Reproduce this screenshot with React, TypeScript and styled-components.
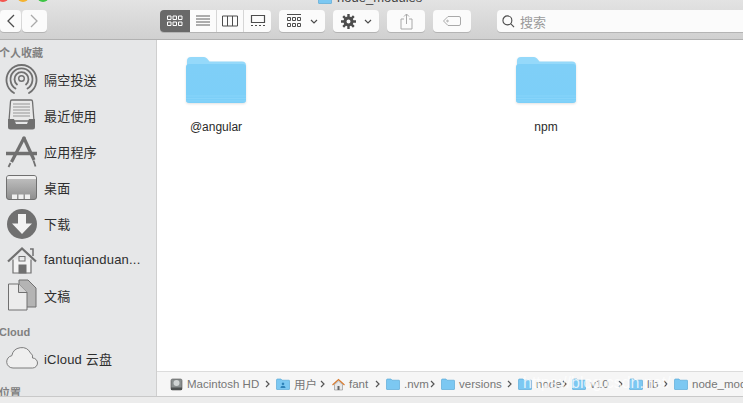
import React from 'react'
import styled, { createGlobalStyle } from 'styled-components'

const GlobalStyle = createGlobalStyle`
  html, body {
    margin: 0;
    padding: 0;
    background: #fff;
    overflow: hidden;
  }
  body {
    font-family: "Liberation Sans", "Noto Sans CJK SC", sans-serif;
    -webkit-font-smoothing: antialiased;
  }
`

const Window = styled.div`
  width: 743px;
  height: 403px;
  display: flex;
  flex-direction: column;
  overflow: hidden;
`

const Chrome = styled.div`
  height: 39px;
  flex: none;
  background: linear-gradient(#e3e3e3, #d0d0d0);
  border-bottom: 1px solid #b1b1b1;
  position: relative;
`

const Lights = styled.div`
  position: absolute;
  top: -10px;
  left: -3px;
  display: flex;
  gap: 8px;
`

const Light = styled.span<{ $color: string }>`
  width: 12px;
  height: 12px;
  border-radius: 50%;
  background: ${p => p.$color};
`

const Title = styled.div`
  position: absolute;
  top: -9px;
  left: 318px;
  display: flex;
  align-items: center;
  gap: 5px;
  font-size: 13px;
  color: #444;
  line-height: 13px;
`

const Tools = styled.div`
  display: flex;
  align-items: stretch;
  height: 22px;
  padding-top: 10px;
`

const Btn = styled.div<{ $w: number; $ml?: number; $dim?: boolean }>`
  width: ${p => p.$w}px;
  margin-left: ${p => p.$ml ?? 0}px;
  flex: none;
  box-sizing: border-box;
  background: #fbfbfb;
  border-radius: 4px;
  box-shadow: 0 1px 0 #b4b4b4;
  display: flex;
  align-items: center;
  justify-content: center;
  gap: 8px;
  color: ${p => (p.$dim ? '#a9a9a9' : '#4c4c4c')};
`

const Segs = styled.div`
  display: flex;
  margin-left: 113px;
  width: 111px;
  border-radius: 4px;
  overflow: hidden;
  box-shadow: 0 1px 0 #b4b4b4;
`

const Seg = styled.div<{ $w: number; $on?: boolean }>`
  width: ${p => p.$w}px;
  flex: none;
  box-sizing: border-box;
  display: flex;
  align-items: center;
  justify-content: center;
  background: ${p => (p.$on ? '#696969' : '#fbfbfb')};
  color: ${p => (p.$on ? '#fff' : '#4c4c4c')};
  border-right: ${p => (p.$on ? 'none' : '1px solid #d6d6d6')};
  &:last-child { border-right: none; }
`

const Search = styled.div`
  flex: 1;
  margin-left: 26px;
  background: #fbfbfb;
  border-radius: 4px 0 0 4px;
  box-shadow: 0 1px 0 #b4b4b4;
  display: flex;
  align-items: center;
  gap: 5px;
  padding-left: 5px;
  font-size: 13px;
  color: #9a9a9a;
`

const Body = styled.div`
  flex: 1;
  display: flex;
  min-height: 0;
`

const Sidebar = styled.div`
  width: 156px;
  flex: none;
  background: #e6e7e8;
  border-right: 1px solid #cfcfcf;
  overflow: hidden;
  padding-top: 5px;
`

const Heading = styled.div<{ $mt?: number }>`
  font-size: 11px;
  line-height: 16px;
  font-weight: 700;
  color: #808080;
  margin-left: -1px;
  margin-top: ${p => p.$mt ?? 0}px;
  white-space: nowrap;
`

const Item = styled.div`
  height: 36px;
  display: flex;
  align-items: center;
  gap: 6px;
  padding-left: 5px;
  font-size: 13px;
  letter-spacing: 0.2px;
  color: #2e2e2e;
  white-space: nowrap;
`

const Main = styled.div`
  flex: 1;
  display: flex;
  flex-direction: column;
  min-width: 0;
  position: relative;
`

const Grid = styled.div`
  flex: 1;
  display: flex;
  align-items: flex-start;
  gap: 270px;
  padding: 16px 0 0 29px;
`

const Cell = styled.div`
  width: 60px;
  display: flex;
  flex-direction: column;
  align-items: center;
  font-size: 12px;
  color: #2a2a2a;
`

const FolderArt = styled.svg`
  display: block;
  filter: drop-shadow(0 1px 1px rgba(0, 0, 0, 0.12));
`

const Label = styled.div`
  margin-top: 16px;
  line-height: 16px;
  white-space: nowrap;
`

const PathBar = styled.div`
  height: 25px;
  flex: none;
  box-sizing: border-box;
  border-top: 1px solid #dcdcdc;
  background: #f6f6f6;
  display: flex;
  align-items: center;
  padding-left: 13px;
  font-size: 11.5px;
  color: #777;
  white-space: nowrap;
  overflow: hidden;
  svg { flex: none; }
`

const DiskIcon = styled.svg`
  margin-right: 4px;
`

const Crumb = styled.span<{ $w: number }>`
  display: flex;
  align-items: center;
  gap: 4px;
  flex: none;
  width: ${p => p.$w}px;
  overflow: hidden;
`

const Sep = styled.span<{ $w: number; $pad: number }>`
  flex: none;
  box-sizing: border-box;
  width: ${p => p.$w}px;
  padding-left: ${p => p.$pad}px;
  display: flex;
  color: #555;
`

const Footer = styled.div`
  height: 6px;
  flex: none;
  background: #ececec;
  border-top: 1px solid #c9c9c9;
`

const Watermark = styled.div`
  position: absolute;
  left: 366px;
  bottom: 3px;
  line-height: 20px;
  font-size: 16px;
  color: rgba(255, 255, 255, 0.78);
  white-space: nowrap;
`

const Folder = () => (
  <FolderArt width="60" height="47" viewBox="0 0 60 47">
    <defs>
      <linearGradient id="folderBody" x1="0" y1="0" x2="0" y2="1">
        <stop offset="0" stopColor="#7fcff7" />
        <stop offset="1" stopColor="#7ccff8" />
      </linearGradient>
    </defs>
    <path d="M1 5a4 4 0 0 1 4-4h13a4 4 0 0 1 3 1.500l2.500 3h32.500a4 4 0 0 1 4 4v10H1z" fill="#95d9fa" />
    <path d="M0 11a3 3 0 0 1 3-3h54a3 3 0 0 1 3 3v33a3 3 0 0 1-3 3H3a3 3 0 0 1-3-3z" fill="url(#folderBody)" />
    <path d="M0 40h60M0 42.500h60M0 45h60" stroke="#8ad6fa" strokeWidth="0.8" />
  </FolderArt>
)

const MiniFolder = ({ mark }: { mark?: boolean }) => (
  <svg width="14" height="12" viewBox="0 0 14 12">
    <path d="M0.500 2a1 1 0 0 1 1-1h3.500l1 1.200h7a.5.5 0 0 1 .5.5V11a.5.5 0 0 1-.5.500H1a.5.5 0 0 1-.5-.5z" fill="#7cc8f2" stroke="#4ea3d4" strokeWidth="0.6" />
    {mark && <path d="M7 4.500a1.300 1.300 0 1 1-.01 0zM4.500 10c0-1.500 1-2.300 2.500-2.300s2.500.8 2.500 2.300z" fill="#2f82b8" />}
  </svg>
)

const Chevron = () => (
  <svg width="5" height="8" viewBox="0 0 5 8"><path d="M1 1l3 3-3 3" fill="none" stroke="currentColor" strokeWidth="1.200" /></svg>
)

const grey = '#707070'

const AirDropIcon = () => (
  <svg width="33" height="33" viewBox="0 0 33 33" fill="none" stroke={grey} strokeLinecap="round">
    <path d="M9 30A15 15 0 1 1 24 30" strokeWidth="1.800" />
    <path d="M10.500 25.500A11 11 0 1 1 22.500 25.500" strokeWidth="1.800" />
    <path d="M12 21.500A7 7 0 1 1 21 21.500" strokeWidth="1.800" />
    <circle cx="16.500" cy="15.500" r="2.800" strokeWidth="1.400" />
  </svg>
)

const TrayIcon = () => (
  <svg width="33" height="33" viewBox="0 0 33 33">
    <path d="M7 1h19a1.500 1.500 0 0 1 1.500 1.500L29 22H4L5.500 2.500A1.500 1.500 0 0 1 7 1z" fill="#e9e9e9" stroke={grey} strokeWidth="1.300" />
    <path d="M8 5h17M8 8h17M8 11h17M8 14h17M8 17h17" stroke="#959595" />
    <path d="M3 20h6l2 5h11l2-5h6v8a2.500 2.500 0 0 1-2.500 2.500h-22A2.500 2.500 0 0 1 3 28z" fill={grey} />
  </svg>
)

const AppsIcon = () => (
  <svg width="33" height="33" viewBox="0 0 33 33" fill="none" stroke={grey}>
    <path d="M1 18.500h31" strokeWidth="3.500" />
    <path d="M18.500 2l10.500 23" strokeWidth="3.200" />
    <path d="M19.500 2L6.500 27" strokeWidth="3.200" />
    <path d="M5.500 28l-2 4M28.500 25.500l2 6" strokeWidth="1.800" />
  </svg>
)

const DesktopIcon = () => (
  <svg width="33" height="33" viewBox="0 0 33 33">
    <defs>
      <linearGradient id="desk" x1="0" y1="0" x2="0" y2="1">
        <stop offset="0" stopColor="#c4c4c4" />
        <stop offset="1" stopColor="#8e8e8e" />
      </linearGradient>
    </defs>
    <rect x="1.500" y="4.500" width="30" height="24" rx="2.500" fill="url(#desk)" stroke={grey} />
    <path d="M2 7a2 2 0 0 1 2-2h25a2 2 0 0 1 2 2v1H2z" fill="#f0f0f0" />
    <path d="M7 23.500h5v4.500H7zM13.500 23.500h5v4.500h-5zM20 23.500h5v4.500h-5z" fill="#efefef" />
  </svg>
)

const DownloadIcon = () => (
  <svg width="33" height="33" viewBox="0 0 33 33">
    <circle cx="17" cy="17" r="15" fill={grey} />
    <path d="M13 7h8v9.500h6L17 27 7 16.500h6z" fill="#f2f2f2" />
  </svg>
)

const HomeIcon = () => (
  <svg width="33" height="33" viewBox="0 0 33 33" fill="none" stroke={grey}>
    <path d="M3 18.500L17 5.500l14 13" strokeWidth="2.200" />
    <path d="M25 6h3v7" strokeWidth="1.500" />
    <path d="M8 16.500V30h18V16.500" strokeWidth="1.200" fill="#f3f3f3" />
    <rect x="14" y="13.500" width="6" height="4.500" strokeWidth="1" />
    <rect x="14" y="22" width="7" height="8" fill={grey} />
  </svg>
)

const DocsIcon = () => (
  <svg width="33" height="33" viewBox="0 0 33 33">
    <path d="M14 1h9l8 8v19H14z" fill="#b4b4b4" stroke={grey} />
    <path d="M3.500 5h10l8.500 8.500V31H3.500z" fill="#ececec" stroke={grey} />
    <path d="M13.500 5v8.500H22" fill="#d4d4d4" stroke={grey} />
  </svg>
)

const CloudIcon = () => (
  <svg width="33" height="33" viewBox="0 0 33 33">
    <path d="M8 26a6.200 6.200 0 0 1-1.200-12.300A10 10 0 0 1 25.500 11a4.500 4.500 0 0 1 2 5 5 5 0 0 1 0 10z" fill="#efefef" stroke={grey} strokeWidth="0.9" />
  </svg>
)

const ViewIcon = ({ type }: { type: string }) => (
  <svg width="16" height="12" viewBox="0 0 16 12" fill="none" stroke="currentColor">
    {type === 'icons' && <path d="M.5 1h3.500v3.500H.5zM6 1h3.500v3.500H6zM11.500 1H15v3.500h-3.500zM.5 7h3.500v3.500H.5zM6 7h3.500v3.500H6zM11.500 7H15v3.500h-3.500z" />}
    {type === 'list' && <path d="M1 1h14M1 4h14M1 7h14M1 10h14" strokeWidth="0.9" />}
    {type === 'cols' && <path d="M.5 1h15v10H.5zM5.500 1v10M10.500 1v10" />}
    {type === 'flow' && <path d="M1.500 .5h13v7h-13zM1 10.500h2M5 10.500h2M9 10.500h2M13 10.500h2" strokeWidth="1.200" />}
  </svg>
)

const ArrangeIcon = () => (
  <svg width="15" height="14" viewBox="0 0 15 14" fill="none" stroke="currentColor">
    <path d="M0 .5h14" />
    <path d="M.5 3.500h3v3h-3zM5.500 3.500h3v3h-3zM10.500 3.500h3v3h-3zM.5 9.500h3v3h-3zM5.500 9.500h3v3h-3zM10.500 9.500h3v3h-3z" />
  </svg>
)

const Caret = () => (
  <svg width="8" height="5" viewBox="0 0 8 5" fill="none" stroke="currentColor" strokeWidth="1.200"><path d="M1 1l3 3 3-3" /></svg>
)

const sideItems = [
  { icon: <AirDropIcon />, label: '隔空投送' },
  { icon: <TrayIcon />, label: '最近使用' },
  { icon: <AppsIcon />, label: '应用程序' },
  { icon: <DesktopIcon />, label: '桌面' },
  { icon: <DownloadIcon />, label: '下载' },
  { icon: <HomeIcon />, label: 'fantuqianduan...' },
  { icon: <DocsIcon />, label: '文稿' },
]

const App: React.FC = () => {
  return (
    <Window>
      <GlobalStyle />
      <Chrome>
        <Lights>
          <Light $color="#f3564f" />
          <Light $color="#f5b32f" />
          <Light $color="#3cc544" />
        </Lights>
        <Title>
          <MiniFolder />
          <span>node_modules</span>
        </Title>
        <Tools>
          <Btn $w={21}>
            <svg width="9" height="14" viewBox="0 0 9 14" fill="none" stroke="currentColor" strokeWidth="1.300"><path d="M8 1L2 7l6 6" /></svg>
          </Btn>
          <Btn $w={25} $ml={1} $dim>
            <svg width="9" height="14" viewBox="0 0 9 14" fill="none" stroke="currentColor" strokeWidth="1.300"><path d="M1 1l6 6-6 6" /></svg>
          </Btn>
          <Segs>
            <Seg $w={30} $on><ViewIcon type="icons" /></Seg>
            <Seg $w={27}><ViewIcon type="list" /></Seg>
            <Seg $w={27}><ViewIcon type="cols" /></Seg>
            <Seg $w={27}><ViewIcon type="flow" /></Seg>
          </Segs>
          <Btn $w={46} $ml={8}>
            <ArrangeIcon />
            <Caret />
          </Btn>
          <Btn $w={46} $ml={8}>
            <svg width="15" height="15" viewBox="0 0 15 15">
              <circle cx="7.500" cy="7.500" r="3.500" fill="none" stroke="currentColor" strokeWidth="3" />
              <path d="M7.500 0v15M0 7.500h15M2.200 2.200l10.600 10.600M12.800 2.200L2.200 12.800" stroke="currentColor" strokeWidth="2.400" strokeDasharray="3 9 3 0" />
            </svg>
            <Caret />
          </Btn>
          <Btn $w={38} $ml={8} $dim>
            <svg width="13" height="17" viewBox="0 0 13 17" fill="none" stroke="currentColor"><path d="M4 6H1v10h11V6H9M6.500 11V1M4 3.500L6.500 1 9 3.500" /></svg>
          </Btn>
          <Btn $w={38} $ml={8} $dim>
            <svg width="18" height="10" viewBox="0 0 18 10" fill="none" stroke="currentColor"><path d="M5 .5h11a1.500 1.500 0 0 1 1.500 1.500v6a1.500 1.500 0 0 1-1.500 1.500H5L.5 5z" /><circle cx="4.500" cy="5" r="0.800" /></svg>
          </Btn>
          <Search>
            <svg width="13" height="13" viewBox="0 0 14 14" fill="none" stroke="#4c4c4c" strokeWidth="1.200"><circle cx="5.800" cy="5.800" r="4.800" /><path d="M9.300 9.300L13 13" /></svg>
            <span>搜索</span>
          </Search>
        </Tools>
      </Chrome>
      <Body>
        <Sidebar>
          <Heading>个人收藏</Heading>
          {sideItems.map(item => (
            <Item key={item.label}>
              {item.icon}
              <span>{item.label}</span>
            </Item>
          ))}
          <Heading $mt={11}>Cloud</Heading>
          <Item>
            <CloudIcon />
            <span>iCloud 云盘</span>
          </Item>
          <Heading $mt={9}>位置</Heading>
        </Sidebar>
        <Main>
          <Grid>
            <Cell>
              <Folder />
              <Label>@angular</Label>
            </Cell>
            <Cell>
              <Folder />
              <Label>npm</Label>
            </Cell>
          </Grid>
          <PathBar>
            <DiskIcon width="13" height="13" viewBox="0 0 13 13">
              <rect x="1" y="1" width="11" height="11" rx="1.500" fill="#8a8f8f" stroke="#555" strokeWidth="0.6" />
              <circle cx="6.500" cy="5" r="3" fill="#d0d4d4" />
              <rect x="1" y="9.500" width="11" height="2.500" fill="#4d5050" />
            </DiskIcon>
            <Crumb $w={74}>Macintosh HD</Crumb>
            <Sep $w={15} $pad={4}><Chevron /></Sep>
            <Crumb $w={42}><MiniFolder mark />用户</Crumb>
            <Sep $w={14} $pad={2}><Chevron /></Sep>
            <Crumb $w={40}>
              <svg width="13" height="13" viewBox="0 0 13 13">
                <path d="M.5 7l6-5.500 6 5.500" fill="none" stroke="#d97a2c" strokeWidth="1.200" />
                <path d="M2.500 6.500V12h8V6.500L6.500 3z" fill="#e9e9e9" stroke="#777" strokeWidth="0.5" />
                <rect x="5.500" y="8" width="2" height="4" fill="#666" />
              </svg>
              fant
            </Crumb>
            <Sep $w={14} $pad={3}><Chevron /></Sep>
            <Crumb $w={44}><MiniFolder />.nvm</Crumb>
            <Sep $w={11} $pad={0}><Chevron /></Sep>
            <Crumb $w={61}><MiniFolder />versions</Crumb>
            <Sep $w={16} $pad={5}><Chevron /></Sep>
            <Crumb $w={44}><MiniFolder />node</Crumb>
            <Sep $w={10} $pad={0}><Chevron /></Sep>
            <Crumb $w={44}><MiniFolder />v10</Crumb>
            <Sep $w={13} $pad={2}><Chevron /></Sep>
            <Crumb $w={33}><MiniFolder />lib</Crumb>
            <Sep $w={12} $pad={1}><Chevron /></Sep>
            <Crumb $w={80}><MiniFolder />node_modules</Crumb>
          </PathBar>
          <Watermark>https://blog.csdn.net/</Watermark>
        </Main>
      </Body>
      <Footer />
    </Window>
  )
}

export default App
